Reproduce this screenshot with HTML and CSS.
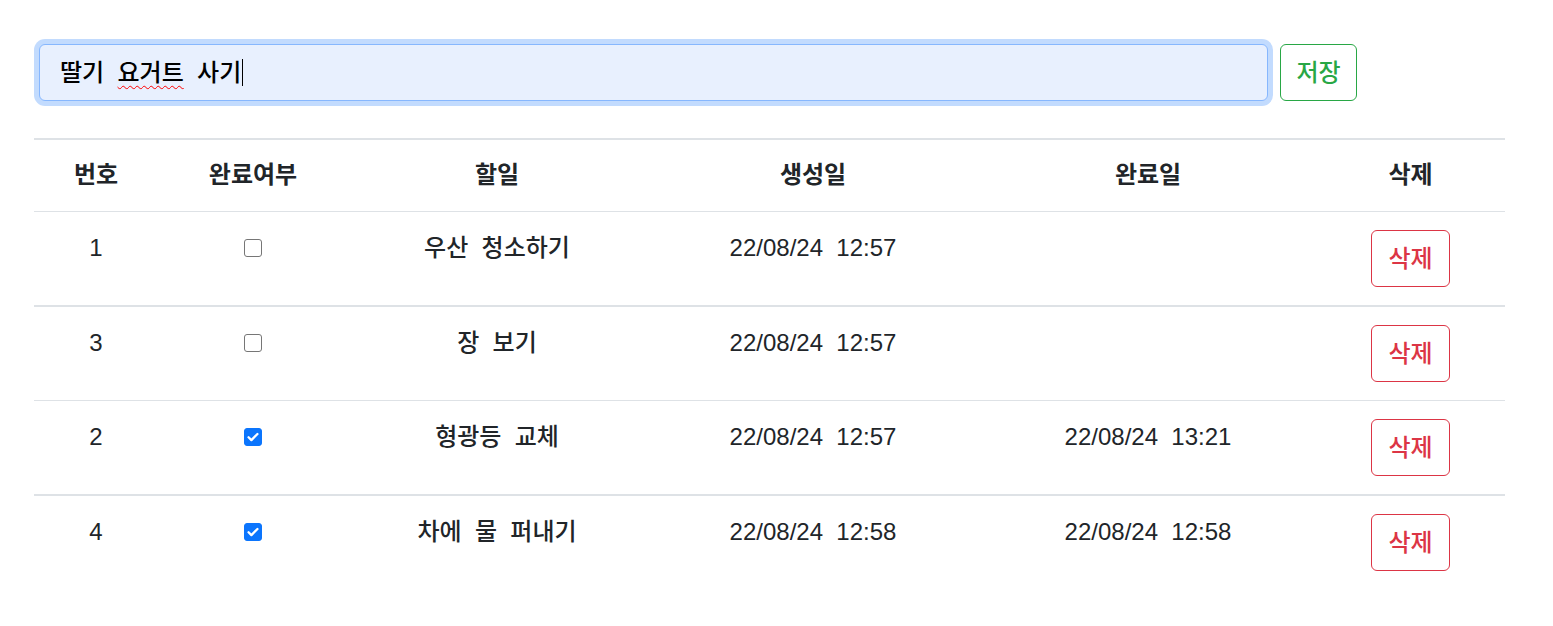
FILE: index.html
```html
<!DOCTYPE html>
<html lang="ko">
<head>
<meta charset="utf-8">
<title>Todo</title>
<link rel="stylesheet" href="styles.css">
</head>
<body>
<div class="app">
  <form class="todo-form">
    <div class="text-input" role="textbox"><span>딸기</span>&nbsp;&nbsp;<span class="misspelled">요거트</span>&nbsp;&nbsp;<span>사기</span><span class="caret"></span></div>
    <button type="button" class="btn btn-save">저장</button>
  </form>

  <table class="todo-table">
    <colgroup>
      <col class="col-no">
      <col class="col-done">
      <col class="col-task">
      <col class="col-created">
      <col class="col-finished">
      <col class="col-delete">
    </colgroup>
    <thead>
      <tr>
        <th>번호</th>
        <th>완료여부</th>
        <th>할일</th>
        <th>생성일</th>
        <th>완료일</th>
        <th>삭제</th>
      </tr>
    </thead>
    <tbody>
      <tr>
        <td>1</td>
        <td><input type="checkbox" class="check"></td>
        <td>우산&nbsp;&nbsp;청소하기</td>
        <td>22/08/24&nbsp;&nbsp;12:57</td>
        <td></td>
        <td><button type="button" class="btn btn-delete">삭제</button></td>
      </tr>
      <tr>
        <td>3</td>
        <td><input type="checkbox" class="check"></td>
        <td>장&nbsp;&nbsp;보기</td>
        <td>22/08/24&nbsp;&nbsp;12:57</td>
        <td></td>
        <td><button type="button" class="btn btn-delete">삭제</button></td>
      </tr>
      <tr>
        <td>2</td>
        <td><input type="checkbox" class="check" checked></td>
        <td>형광등&nbsp;&nbsp;교체</td>
        <td>22/08/24&nbsp;&nbsp;12:57</td>
        <td>22/08/24&nbsp;&nbsp;13:21</td>
        <td><button type="button" class="btn btn-delete">삭제</button></td>
      </tr>
      <tr>
        <td>4</td>
        <td><input type="checkbox" class="check" checked></td>
        <td>차에&nbsp;&nbsp;물&nbsp;&nbsp;퍼내기</td>
        <td>22/08/24&nbsp;&nbsp;12:58</td>
        <td>22/08/24&nbsp;&nbsp;12:58</td>
        <td><button type="button" class="btn btn-delete">삭제</button></td>
      </tr>
    </tbody>
  </table>
</div>
</body>
</html>
```

FILE: styles.css
```css
* {
  box-sizing: border-box;
}

body {
  margin: 0;
  background: #ffffff;
  color: #212529;
  font-family: "Liberation Sans", "Noto Sans CJK KR", sans-serif;
  font-size: 24px;
  font-weight: 500;
  line-height: 36px;
}

.app {
  width: 1471px;
  margin-left: 34px;
  padding-top: 44px;
}

.todo-form {
  display: flex;
  gap: 12px;
  width: 1318px;
  margin: 0 0 37px 5px;
}

.text-input {
  flex: 1;
  height: 57px;
  display: flex;
  align-items: center;
  padding: 0 18px 0 20px;
  background: #e8f0fe;
  border: 1.5px solid #86b7fe;
  border-radius: 6px;
  box-shadow: 0 0 0 5px rgba(13, 110, 253, 0.25);
  color: #000000;
  white-space: pre;
}

.misspelled {
  text-decoration: underline wavy #ff0000;
  text-decoration-thickness: 1px;
  text-underline-offset: 4px;
}

.caret {
  display: inline-block;
  width: 1px;
  height: 27px;
  background: #000000;
  margin-left: 1px;
}

.btn {
  font-family: inherit;
  font-size: 24px;
  font-weight: 500;
  line-height: 36px;
  background: #ffffff;
  border-radius: 6px;
  padding: 0;
  cursor: pointer;
}

.btn-save {
  width: 77px;
  height: 57px;
  color: #28a745;
  border: 1.5px solid #28a745;
}

.btn-delete {
  width: 79px;
  height: 57px;
  color: #dc3545;
  border: 1.5px solid #dc3545;
}

.todo-table {
  width: 1471px;
  border-collapse: collapse;
  table-layout: fixed;
}

.col-no { width: 124px; }
.col-done { width: 190px; }
.col-task { width: 298px; }
.col-created { width: 334px; }
.col-finished { width: 336px; }
.col-delete { width: 189px; }

.todo-table thead tr {
  border-top: 2px solid #dee2e6;
  border-bottom: 1px solid #dee2e6;
}

.todo-table th {
  font-weight: 700;
  text-align: center;
  padding: 17px 8px 18px;
}

.todo-table td {
  text-align: center;
  vertical-align: top;
  padding: 18px 8px 18px;
  white-space: nowrap;
}

.todo-table tbody tr:nth-child(1),
.todo-table tbody tr:nth-child(3) {
  border-bottom: 2px solid #dee2e6;
}

.todo-table tbody tr:nth-child(2) {
  border-bottom: 1px solid #dee2e6;
}

.check {
  appearance: none;
  -webkit-appearance: none;
  width: 18px;
  height: 18px;
  margin: 9px 0 0;
  border: 1.5px solid #767676;
  border-radius: 3px;
  background: #ffffff;
  vertical-align: top;
}

.check:checked {
  border-color: #0b75fd;
  background: #0b75fd url("data:image/svg+xml;utf8,<svg xmlns='http://www.w3.org/2000/svg' viewBox='0 0 18 18'><path d='M4 9.3l3.2 3.2L14 5.6' fill='none' stroke='white' stroke-width='2.6' stroke-linecap='round' stroke-linejoin='round'/></svg>") center / 16px 16px no-repeat;
}
```
